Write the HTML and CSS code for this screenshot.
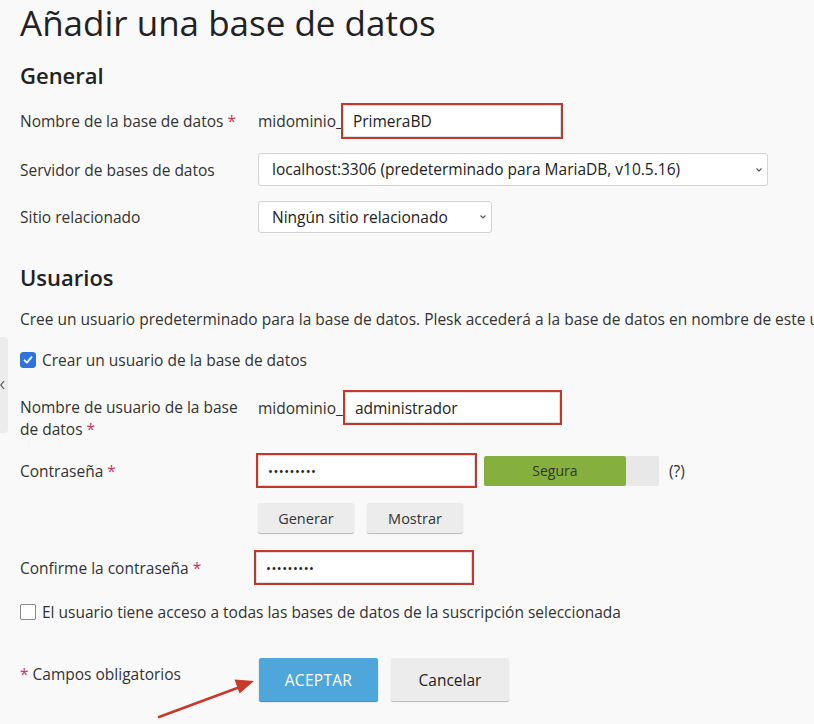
FILE: index.html
```html
<!DOCTYPE html>
<html lang="es">
<head>
  <meta charset="UTF-8">
  <title>Añadir una base de datos</title>
  <link rel="stylesheet" href="styles.css">
</head>
<body>

<div class="side-tab">
  <svg width="6" height="12" viewBox="0 0 6 12"><path d="M4 2 L0.8 6 L4 10" fill="none" stroke="#555" stroke-width="1.2"/></svg>
</div>

<div class="page">
  <h1>Añadir una base de datos</h1>

  <h2 class="section-title general-title">General</h2>

  <div class="form-row name-row">
    <label class="row-label">Nombre de la base de datos <span class="req">*</span></label>
    <div class="field">
      <span class="prefix">midominio_</span>
      <input class="text-input marked db-name" type="text" value="PrimeraBD">
    </div>
  </div>

  <div class="form-row server-row">
    <label class="row-label">Servidor de bases de datos</label>
    <div class="field">
      <div class="select wide">localhost:3306 (predeterminado para MariaDB, v10.5.16)
        <svg class="caret" width="8" height="6" viewBox="0 0 8 6"><path d="M1.5 1.5 L4 4 L6.5 1.5" fill="none" stroke="#555" stroke-width="1.1"/></svg>
      </div>
    </div>
  </div>

  <div class="form-row site-row">
    <label class="row-label">Sitio relacionado</label>
    <div class="field">
      <div class="select narrow">Ningún sitio relacionado
        <svg class="caret" width="8" height="6" viewBox="0 0 8 6"><path d="M1.5 1.5 L4 4 L6.5 1.5" fill="none" stroke="#555" stroke-width="1.1"/></svg>
      </div>
    </div>
  </div>

  <h2 class="section-title users-title">Usuarios</h2>

  <p class="hint">Cree un usuario predeterminado para la base de datos. Plesk accederá a la base de datos en nombre de este usuario.</p>

  <div class="check-row create-row">
    <span class="checkbox checked">
      <svg width="12" height="12" viewBox="0 0 12 12"><path d="M2.5 6.3l2.4 2.4L9.6 3.2" fill="none" stroke="#fff" stroke-width="1.8" stroke-linecap="round" stroke-linejoin="round"/></svg>
    </span>
    Crear un usuario de la base de datos
  </div>

  <div class="form-row user-row">
    <label class="row-label">Nombre de usuario de la base de datos <span class="req">*</span></label>
    <div class="field">
      <span class="prefix">midominio_</span>
      <input class="text-input marked user-name" type="text" value="administrador">
    </div>
  </div>

  <div class="form-row pass-row">
    <label class="row-label">Contraseña <span class="req">*</span></label>
    <div class="field">
      <input class="text-input marked pass" type="text" value="•••••••••">
      <div class="strength">
        <div class="strength-fill" style="width: 81%">Segura</div>
      </div>
      <span class="help">(?)</span>
    </div>
  </div>

  <div class="form-row btn-row">
    <span></span>
    <div class="field">
      <button class="btn small-btn" type="button">Generar</button>
      <button class="btn small-btn" type="button">Mostrar</button>
    </div>
  </div>

  <div class="form-row confirm-row">
    <label class="row-label">Confirme la contraseña <span class="req">*</span></label>
    <div class="field">
      <input class="text-input marked pass confirm" type="text" value="•••••••••">
    </div>
  </div>

  <div class="check-row access-row">
    <span class="checkbox"></span>
    El usuario tiene acceso a todas las bases de datos de la suscripción seleccionada
  </div>

  <div class="form-footer">
    <span class="footer-note"><span class="req">*</span> Campos obligatorios</span>
    <div class="footer-buttons">
      <button class="btn primary" type="button">ACEPTAR</button>
      <button class="btn cancel" type="button">Cancelar</button>
      <svg class="arrow" width="110" height="54" viewBox="0 0 110 54">
        <path d="M5 50 L86 20" stroke="#c9392b" stroke-width="2.5" fill="none" stroke-linecap="round"/>
        <path d="M100 14 L80.5 12.5 L85.6 26.6 Z" fill="#c9392b"/>
      </svg>
    </div>
  </div>
</div>

</body>
</html>
```

FILE: styles.css
```css
html, body {
  margin: 0;
  background: #f9f9f9;
}

body {
  font-family: "Open Sans", "Noto Sans", sans-serif;
  color: #333;
  overflow: hidden;
  height: 724px;
  position: relative;
}

.page {
  padding: 0 0 0 20px;
  width: 1000px;
}

h1 {
  font-size: 35px;
  font-weight: 400;
  margin: 0;
  line-height: 46px;
  color: #222;
}

.section-title {
  font-size: 22px;
  font-weight: 600;
  margin: 0;
  line-height: 30px;
  color: #222;
}

.general-title {
  margin-top: 14px;
}

.form-row {
  display: grid;
  grid-template-columns: 238px 1fr;
  align-items: center;
  font-size: 15.5px;
}

.name-row {
  margin-top: 13px;
}

.server-row {
  margin-top: 14px;
}

.site-row {
  margin-top: 15px;
}

.req {
  color: #c0385b;
}

.field {
  display: flex;
  align-items: center;
}

.text-input {
  font-family: inherit;
  font-size: 15.5px;
  color: #222;
  background: #fff;
  box-sizing: border-box;
  outline: none;
  padding: 0 10px;
}

.marked {
  border: 2px solid #c0392b;
  box-shadow: inset 0 0 0 1px #ddd;
}

.db-name {
  width: 222px;
  height: 36px;
  margin-left: -2px;
}

.select {
  position: relative;
  background: #fff;
  border: 1px solid #d3d3d3;
  border-radius: 3px;
  box-sizing: border-box;
  height: 33px;
  line-height: 31px;
  padding: 0 13px;
  color: #222;
}

.select.wide {
  width: 510px;
}

.select.narrow {
  width: 234px;
  height: 32px;
  line-height: 30px;
}

.caret {
  position: absolute;
  right: 4px;
  top: 50%;
  margin-top: -3px;
}

.users-title {
  margin-top: 29px;
}

.hint {
  font-size: 15.5px;
  line-height: 22px;
  margin: 16px 0 0;
  white-space: nowrap;
}

.check-row {
  display: flex;
  align-items: center;
  gap: 6px;
  font-size: 15.5px;
  line-height: 22px;
}

.create-row {
  margin-top: 19px;
}

.checkbox {
  width: 16px;
  height: 16px;
  box-sizing: border-box;
  border-radius: 2px;
  border: 1.5px solid #8a8a8a;
  background: #fff;
  display: flex;
  align-items: center;
  justify-content: center;
}

.checkbox.checked {
  background: #2f74d9;
  border-color: #2f74d9;
  border-radius: 3px;
}

.user-row {
  margin-top: 19px;
  align-items: start;
}

.user-row .row-label {
  line-height: 22px;
  padding-right: 20px;
  padding-top: 6px;
}

.user-name {
  width: 219px;
  height: 35px;
}

.pass-row {
  margin-top: 13px;
}

.pass {
  width: 221px;
  height: 35px;
  margin-left: -2px;
  font-size: 13px;
  letter-spacing: 0.5px;
}

.strength {
  margin-left: 7px;
  width: 175px;
  height: 30px;
  background: #e8e8e8;
  border-radius: 2px;
}

.strength-fill {
  height: 100%;
  background: #86b03e;
  border-radius: 2px;
  color: #333;
  font-size: 14px;
  line-height: 30px;
  text-align: center;
}

.help {
  margin-left: 10px;
}

.btn-row {
  margin-top: 15px;
}

.btn {
  font-family: inherit;
  border: none;
  border-radius: 2px;
  cursor: pointer;
}

.small-btn {
  width: 96px;
  height: 30px;
  background: #ececec;
  box-shadow: 0 1px 1px #b8b8b8;
  font-size: 14.5px;
  color: #333;
  margin-right: 13px;
}

.confirm-row {
  margin-top: 17px;
}

.confirm {
  width: 220px;
  margin-left: -4px;
}

.access-row {
  margin-top: 16px;
}

.form-footer {
  display: grid;
  grid-template-columns: 238px 1fr;
  margin-top: 35px;
  font-size: 15.5px;
  line-height: 22px;
}

.footer-note {
  padding-top: 5px;
}

.footer-buttons {
  position: relative;
  display: flex;
  gap: 13px;
  padding-left: 1px;
}

.primary {
  width: 119px;
  height: 43px;
  background: #4ea6da;
  color: #fff;
  font-size: 15.5px;
  letter-spacing: 0.3px;
  box-shadow: 0 1px 1px #3d86b0;
}

.cancel {
  width: 118px;
  height: 43px;
  background: #ececec;
  color: #222;
  font-size: 15.5px;
  box-shadow: 0 1px 1px #b8b8b8;
}

.arrow {
  position: absolute;
  left: -104px;
  top: 9px;
}

.side-tab {
  position: absolute;
  left: 0;
  top: 337px;
  width: 8px;
  height: 96px;
  background: #ececec;
  border-radius: 0 4px 4px 0;
  display: flex;
  align-items: center;
}
```
